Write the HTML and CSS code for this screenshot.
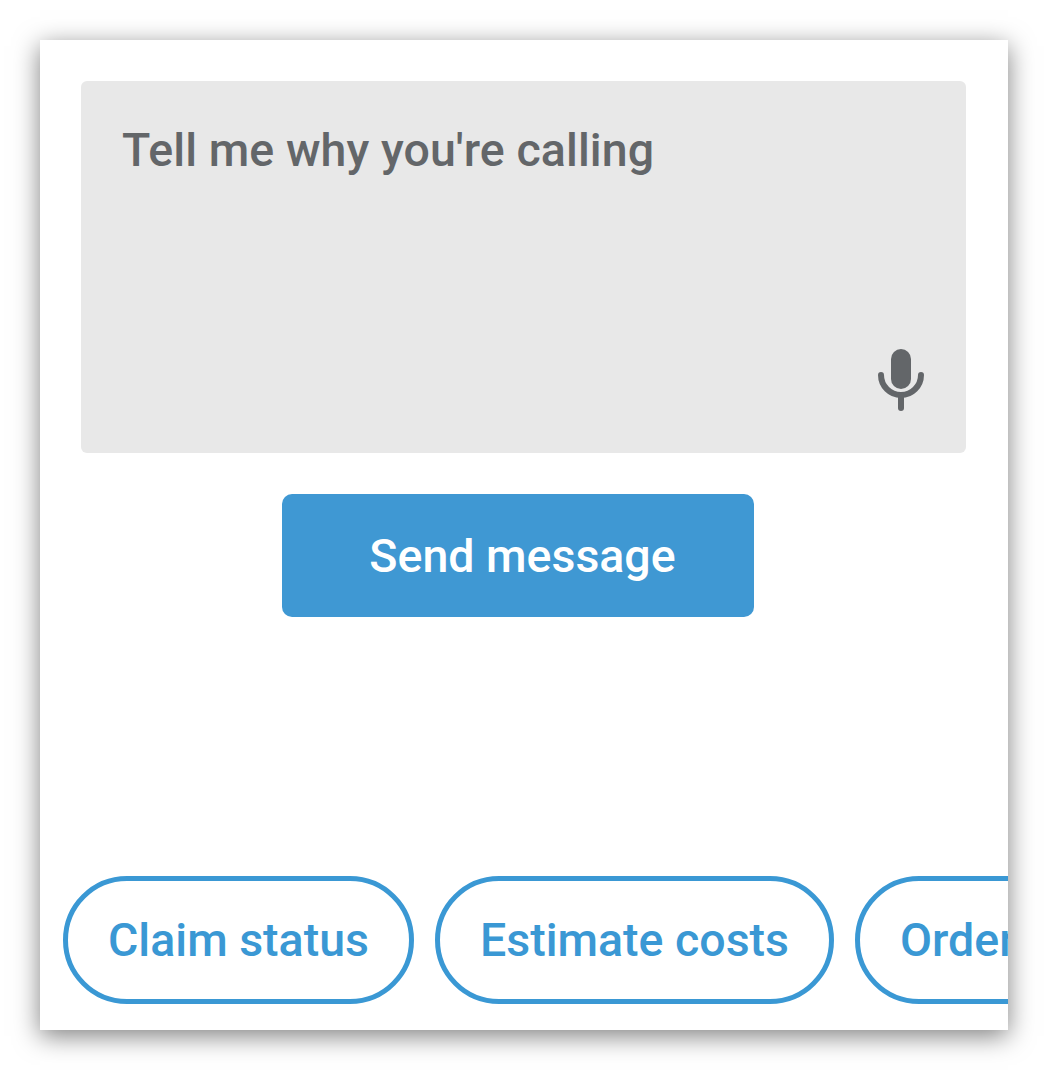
FILE: index.html
```html
<!DOCTYPE html>
<html lang="en">
<head>
  <meta charset="UTF-8">
  <meta name="viewport" content="width=device-width, initial-scale=1.0">
  <title>Message</title>
  <link rel="stylesheet" href="styles.css">
</head>
<body>
  <div class="card">
    <div class="message-box">
      <p class="placeholder">Tell me why you're calling</p>
      <svg class="mic" viewBox="0 0 46 62" width="46" height="62">
        <rect x="13" y="0" width="20" height="40" rx="10" fill="#636669"/>
        <path d="M3 26 C3 37 12 46 23 46 C34 46 43 37 43 26" fill="none" stroke="#636669" stroke-width="6" stroke-linecap="round"/>
        <path d="M23 46 V59" fill="none" stroke="#636669" stroke-width="6" stroke-linecap="round"/>
      </svg>
    </div>

    <button class="send">Send message</button>

    <div class="chips">
      <button class="chip">Claim status</button>
      <button class="chip">Estimate costs</button>
      <button class="chip">Order supplies</button>
    </div>
  </div>
</body>
</html>
```

FILE: styles.css
```css
body {
  margin: 0;
  padding: 40px;
  background: #fff;
  font-family: Roboto, Arial, sans-serif;
}

.card {
  width: 968px;
  height: 990px;
  box-sizing: border-box;
  padding: 41px 42px 26px 41px;
  display: flex;
  flex-direction: column;
  background: #fff;
  overflow: hidden;
  box-shadow: 0 6px 24px rgba(0, 0, 0, 0.5);
}

.message-box {
  height: 372px;
  box-sizing: border-box;
  padding: 42px 42px 42px 41px;
  display: flex;
  flex-direction: column;
  justify-content: space-between;
  background: #e8e8e8;
  border-radius: 6px;
}

.placeholder {
  margin: 0;
  font-size: 46.5px;
  letter-spacing: 0.08px;
  font-weight: 500;
  line-height: 54px;
  color: #636669;
}

.mic {
  align-self: flex-end;
}

.send {
  align-self: flex-start;
  width: 472px;
  height: 123px;
  margin: 41px 0 0 201px;
  padding: 0 0 0 9px;
  border: none;
  border-radius: 10px;
  background: #3f98d3;
  color: #fff;
  font-family: inherit;
  font-size: 46.5px;
  font-weight: 500;
  cursor: pointer;
}

.chips {
  display: flex;
  gap: 21px;
  margin: auto 0 0 -18px;
}

.chip {
  flex: none;
  height: 128px;
  padding: 0 40px;
  border: 5px solid #3a98d4;
  border-radius: 64px;
  background: #fff;
  color: #3a98d4;
  font-family: inherit;
  font-size: 46.5px;
  font-weight: 500;
  cursor: pointer;
}
```
